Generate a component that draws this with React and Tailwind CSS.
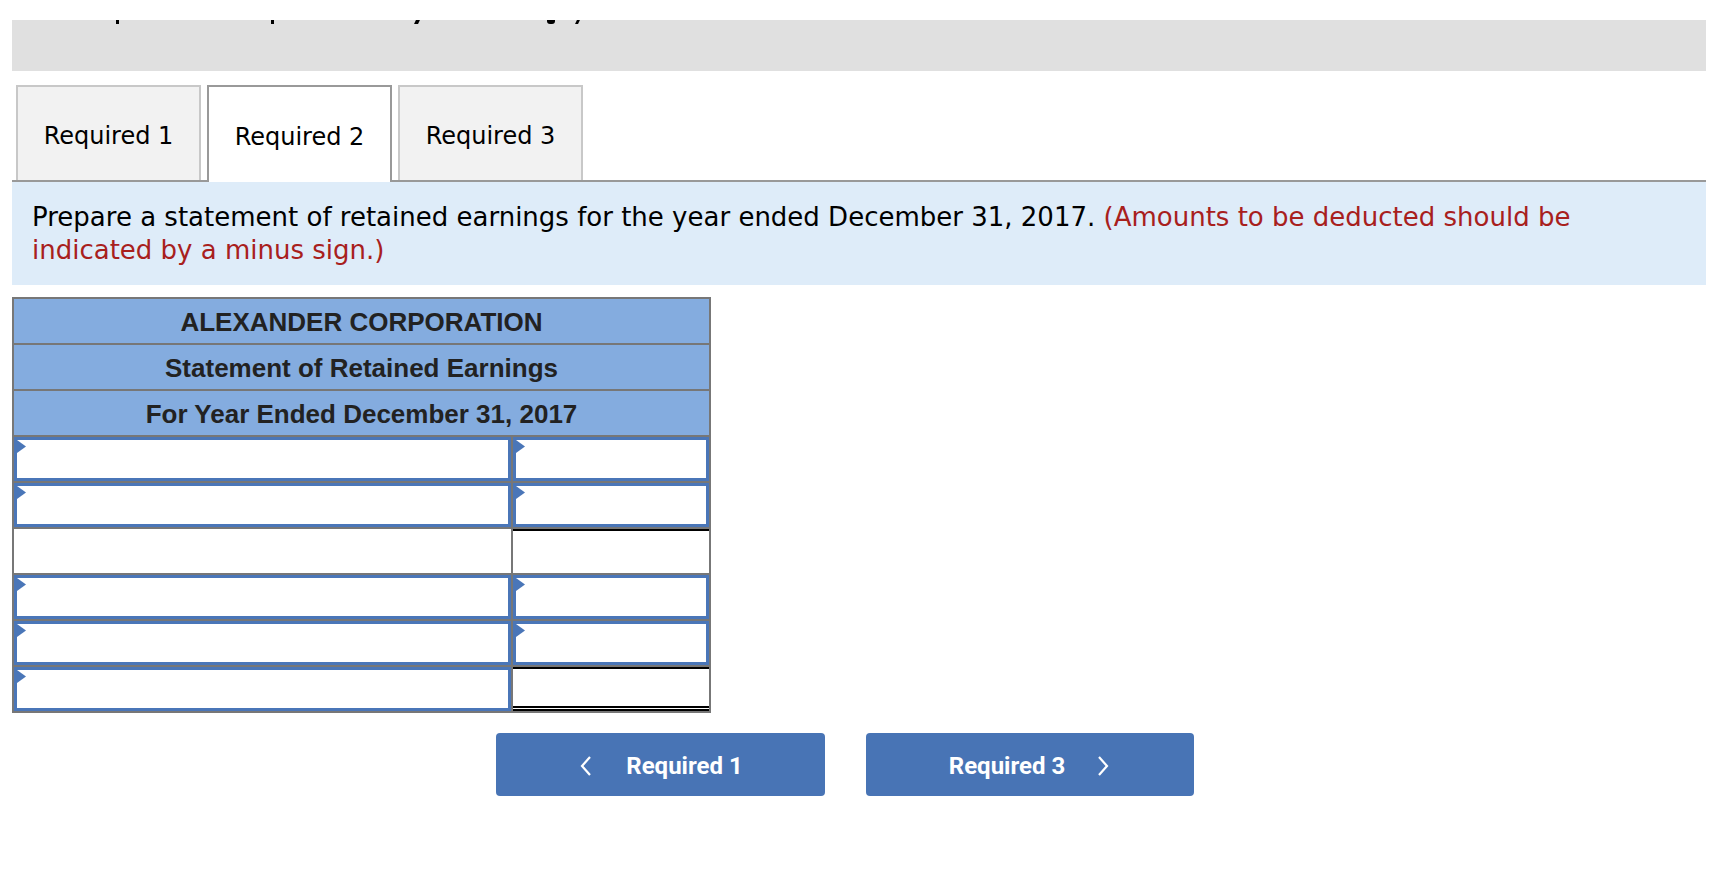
import React from "react";

function Triangle() {
  return (
    <svg className="absolute left-0 top-0" width="10" height="13" viewBox="0 0 10 13">
      <path d="M0 0 L9 6.5 L0 13 Z" fill="#4a76b8" />
    </svg>
  );
}

function InputCell() {
  return (
    <div className="relative bg-white border-[3px] border-[#4a76b8] h-[44px]">
      <Triangle />
    </div>
  );
}

function PlainCell({ top, dbl }) {
  let cls = "bg-white h-[44px]";
  if (top) cls += " border-t-2 border-black";
  if (dbl) cls += " border-b-[5px] border-double border-black";
  return <div className={cls}></div>;
}

function App() {
  const tabs = ["Required 1", "Required 2", "Required 3"];
  const [active, setActive] = React.useState(1);
  // 0 = input, 1 = plain, 2 = plain with subtotal line, 3 = total with double line
  const rows = [
    [0, 0],
    [0, 0],
    [1, 2],
    [0, 0],
    [0, 0],
    [0, 3],
  ];

  return (
    <div className="w-[1718px] h-[880px] bg-white pt-[20px]" style={{ fontFamily: '"DejaVu Sans", Verdana, sans-serif' }}>
      {/* clipped question text above */}
      <div className="relative mx-[12px] h-[51px] bg-[#e0e0e0] overflow-hidden">
        <span className="absolute top-0 left-[104px] w-[3px] h-[4px] bg-black"></span>
        <span className="absolute top-0 left-[259px] w-[3px] h-[4px] bg-black"></span>
        <span className="absolute top-0 left-[403px] w-[4px] h-[4px] bg-black -skew-x-[25deg]"></span>
        <span className="absolute top-0 left-[535px] w-[8px] h-[4px] bg-black rounded-b-[3px]"></span>
        <span className="absolute top-0 left-[564px] w-[3px] h-[4px] bg-black -skew-x-[25deg]"></span>
      </div>

      {/* tabs */}
      <div className="mx-[12px] mt-[14px] flex items-end gap-[6px] pl-[4px] border-b-2 border-[#999999] h-[97px]">
        {tabs.map((t, i) => (
          <button
            key={t}
            onClick={() => setActive(i)}
            className={
              i === active
                ? "w-[185px] h-[97px] -mb-[2px] pt-[4px] bg-white border-2 border-b-0 border-[#999999] text-[24px] text-black"
                : "w-[185px] h-[95px] pt-[4px] bg-[#f2f2f2] border-2 border-b-0 border-[#c8c8c8] text-[24px] text-black"
            }
          >
            {t}
          </button>
        ))}
      </div>

      {/* instructions */}
      <div className="mx-[12px] bg-[#deecf9] px-[20px] pt-[19px] pb-[18px] text-[26px] leading-[33px] text-black">
        Prepare a statement of retained earnings for the year ended December 31, 2017.{" "}
        <span className="text-[#a8201d]">(Amounts to be deducted should be</span>
        <br />
        <span className="text-[#a8201d]">indicated by a minus sign.)</span>
      </div>

      {/* statement table */}
      <div
        className="ml-[12px] mt-[12px] w-[699px] border-2 border-[#777777] bg-[#777777] grid grid-cols-[497px_196px] gap-[2px]"
        style={{ fontFamily: '"Liberation Sans", Arial, sans-serif' }}
      >
        <div className="col-span-2 h-[44px] pt-[3px] bg-[#84acdf] flex items-center justify-center font-bold text-[26px] text-[#222222]">
          ALEXANDER CORPORATION
        </div>
        <div className="col-span-2 h-[44px] pt-[3px] bg-[#84acdf] flex items-center justify-center font-bold text-[26px] text-[#222222]">
          Statement of Retained Earnings
        </div>
        <div className="col-span-2 h-[44px] pt-[3px] bg-[#84acdf] flex items-center justify-center font-bold text-[26px] text-[#222222]">
          For Year Ended December 31, 2017
        </div>
        {rows.map((r, i) =>
          r.map((c, j) => {
            const k = i + "-" + j;
            if (c === 0) return <InputCell key={k} />;
            if (c === 2) return <PlainCell key={k} top />;
            if (c === 3) return <PlainCell key={k} top dbl />;
            return <PlainCell key={k} />;
          })
        )}
      </div>

      {/* nav buttons */}
      <div className="ml-[496px] mt-[20px] flex gap-[41px]" style={{ fontFamily: 'Roboto, "Liberation Sans", sans-serif' }}>
        <button className="w-[329px] h-[63px] pt-[2px] rounded-[4px] bg-[#4874b5] text-white font-bold text-[24px] flex items-center justify-center">
          <svg width="16" height="22" viewBox="0 0 16 22" className="mr-[32px]">
            <path d="M12 2 L4 11 L12 20" fill="none" stroke="white" strokeWidth="2.2" />
          </svg>
          Required 1
        </button>
        <button className="w-[328px] h-[63px] pt-[2px] rounded-[4px] bg-[#4874b5] text-white font-bold text-[24px] flex items-center justify-center">
          Required 3
          <svg width="16" height="22" viewBox="0 0 16 22" className="ml-[30px]">
            <path d="M4 2 L12 11 L4 20" fill="none" stroke="white" strokeWidth="2.2" />
          </svg>
        </button>
      </div>
    </div>
  );
}

export default App;
